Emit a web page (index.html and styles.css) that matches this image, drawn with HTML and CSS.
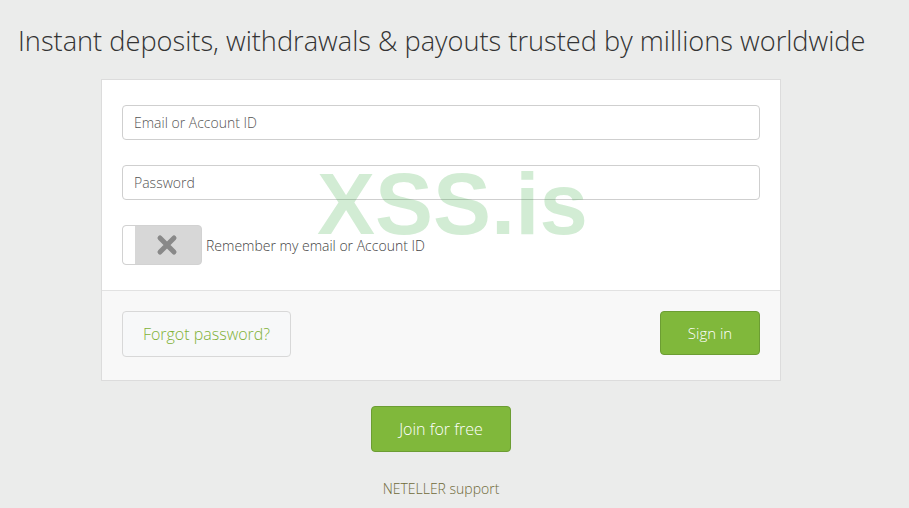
FILE: index.html
```html
<!DOCTYPE html>
<html>
	<head>
		<meta charset="utf-8">
		<title>NETELLER</title>
		<link rel="stylesheet" href="styles.css">
	</head>
	<body>
		<h1 class="page-title">Instant deposits, withdrawals &amp; payouts trusted by millions worldwide</h1>

		<div class="login-wrap">
			<div class="login-card">
				<div class="login-body">
					<input type="text" class="input-text" placeholder="Email or Account ID" />
					<input type="password" class="input-text" placeholder="Password" />
					<div class="remember-row">
						<div class="toggle">
							<span class="toggle-knob"></span>
							<span class="toggle-icon">
								<svg width="22" height="22" viewBox="0 0 22 22">
									<path d="M4 4 L18 18 M18 4 L4 18" stroke="#898989" stroke-width="5" stroke-linecap="round" fill="none" />
								</svg>
							</span>
						</div>
						<label class="remember-label">Remember my email or Account ID</label>
					</div>
					<div class="watermark">XSS.is</div>
				</div>
				<div class="login-footer">
					<button class="btn btn-light">Forgot password?</button>
					<button class="btn btn-green btn-sign">Sign in</button>
				</div>
			</div>

			<div class="join-box">
				<button class="btn btn-green btn-join">Join for free</button>
				<a class="support-link">NETELLER support</a>
			</div>
		</div>
	</body>
</html>
```

FILE: styles.css
```css
html,
body {
	margin: 0;
	background-color: #ebeceb;
	font-family: "Open Sans", "Liberation Sans", sans-serif;
	font-weight: 300;
	font-size: 14px;
	color: #555;
}

.page-title {
	margin: 22px 0 0 18px;
	font-size: 27.2px;
	font-weight: 300;
	line-height: 38px;
	color: #333;
	white-space: nowrap;
}

.login-wrap {
	width: 680px;
	margin: 19px 0 0 101px;
}

.login-card {
	background: #fff;
	border: 1px solid #dcdcdc;
}

.login-body {
	position: relative;
	padding: 25px 20px 25px 20px;
	display: flex;
	flex-direction: column;
	gap: 25px;
}

.input-text {
	box-sizing: border-box;
	width: 100%;
	height: 35px;
	border: 1px solid #cfcfcf;
	border-radius: 4px;
	padding: 0 11px;
	font-family: inherit;
	font-weight: 300;
	font-size: 14px;
	color: #555;
	background: transparent;
	outline: none;
}

.input-text::placeholder {
	color: #555;
}

.remember-row {
	display: flex;
	align-items: center;
	gap: 4px;
}

.toggle {
	box-sizing: border-box;
	width: 80px;
	height: 40px;
	border-radius: 4px;
	background: #d7d7d7;
	border: 1px solid #d2d2d2;
	display: flex;
	overflow: hidden;
}

.toggle-knob {
	width: 12px;
	background: #fff;
	border-radius: 3px 0 0 3px;
}

.toggle-icon {
	flex: 1;
	display: flex;
	align-items: center;
	justify-content: center;
	padding-right: 12px;
	padding-left: 10px;
}

.remember-label {
	font-size: 14px;
	color: #444;
}

.watermark {
	position: absolute;
	left: 215px;
	top: 93px;
	font-family: "Liberation Sans", Arial, sans-serif;
	font-weight: bold;
	font-size: 87px;
	line-height: 62px;
	color: rgba(30, 160, 40, 0.2);
	pointer-events: none;
}

.login-footer {
	background: #f8f8f8;
	border-top: 1px solid #e2e2e2;
	padding: 20px 20px 23px 20px;
	display: flex;
	justify-content: space-between;
	align-items: flex-start;
}

.btn {
	box-sizing: border-box;
	font-family: inherit;
	font-weight: 300;
	border-radius: 4px;
	cursor: pointer;
}

.btn-light {
	width: 169px;
	height: 46px;
	background: #f7f8f9;
	border: 1px solid #d8d8d8;
	color: #7fb136;
	font-size: 16px;
}

.btn-green {
	background: #80b83b;
	border: 1px solid #6c9d33;
	color: #fff;
}

.btn-sign {
	width: 100px;
	height: 44px;
	font-size: 15px;
}

.join-box {
	display: flex;
	flex-direction: column;
	align-items: center;
	padding-top: 25px;
}

.btn-join {
	width: 140px;
	height: 46px;
	font-size: 16px;
}

.support-link {
	margin-top: 27px;
	font-size: 14px;
	color: #6f6a38;
}
```
